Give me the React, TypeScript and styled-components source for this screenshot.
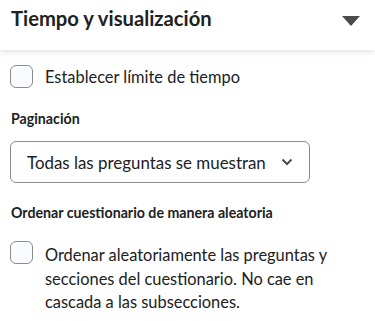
import React from 'react';
import styled, { createGlobalStyle } from 'styled-components';

const GlobalStyle = createGlobalStyle`
  body {
    margin: 0;
    background: #fff;
    font-family: Lato, "Noto Sans", sans-serif;
    color: #202122;
  }
`;

const Panel = styled.div`
  width: 375px;
  height: 321px;
  overflow: hidden;
  background: #fff;
`;

const Header = styled.div`
  height: 50px;
  padding: 0 11px;
  display: flex;
  align-items: flex-start;
  justify-content: space-between;
  box-shadow: 0 2px 6px rgba(0, 0, 0, 0.12);
  position: relative;
`;

const Title = styled.h2`
  margin: 6px 0 0;
  font-size: 20.2px;
  line-height: 24px;
  font-weight: 700;
  color: #202122;
`;

const Caret = styled.span`
  margin: 16px 4px 0 0;
  width: 0;
  height: 0;
  border-left: 9px solid transparent;
  border-right: 9px solid transparent;
  border-top: 10px solid #494c4e;
`;

const Content = styled.div`
  padding: 15px 10px 0;
`;

const CheckRow = styled.label<{ $top?: boolean }>`
  display: flex;
  align-items: ${(p) => (p.$top ? 'flex-start' : 'center')};
  gap: 12px;
  font-size: 16.4px;
  line-height: 23px;
  color: #202122;
`;

const Box = styled.span`
  flex: none;
  width: 21px;
  height: 21px;
  border: 1px solid #868c8f;
  border-radius: 6px;
  background: #f9fbff;
`;

const Label = styled.div<{ $gap: number }>`
  margin: ${(p) => p.$gap}px 0 0 1px;
  font-size: 14.2px;
  line-height: 17px;
  font-weight: 700;
`;

const Select = styled.div`
  margin-top: 14px;
  width: 300px;
  height: 42px;
  box-sizing: border-box;
  border: 1px solid #868c8f;
  border-radius: 6px;
  display: flex;
  align-items: center;
  justify-content: space-between;
  padding: 0 16px 0 16px;
  font-size: 16.9px;
  color: #202122;
`;

const Paragraph = styled.span`
  width: 300px;
  padding-top: 2px;
  line-height: 23.5px;
`;

export default function App() {
  return (
    <Panel>
      <GlobalStyle />
      <Header>
        <Title>Tiempo y visualización</Title>
        <Caret />
      </Header>
      <Content>
        <CheckRow>
          <Box />
          Establecer límite de tiempo
        </CheckRow>
        <Label $gap={22}>Paginación</Label>
        <Select>
          Todas las preguntas se muestran
          <svg width="12" height="8" viewBox="0 0 12 8">
            <path d="M1.5 1.5 L6 6 L10.5 1.5" fill="none" stroke="#494c4e" strokeWidth="2" />
          </svg>
        </Select>
        <Label $gap={21}>Ordenar cuestionario de manera aleatoria</Label>
        <CheckRow $top style={{ marginTop: 20 }}>
          <Box />
          <Paragraph>
            Ordenar aleatoriamente las preguntas y secciones del cuestionario. No cae en cascada a las subsecciones.
          </Paragraph>
        </CheckRow>
      </Content>
    </Panel>
  );
}
